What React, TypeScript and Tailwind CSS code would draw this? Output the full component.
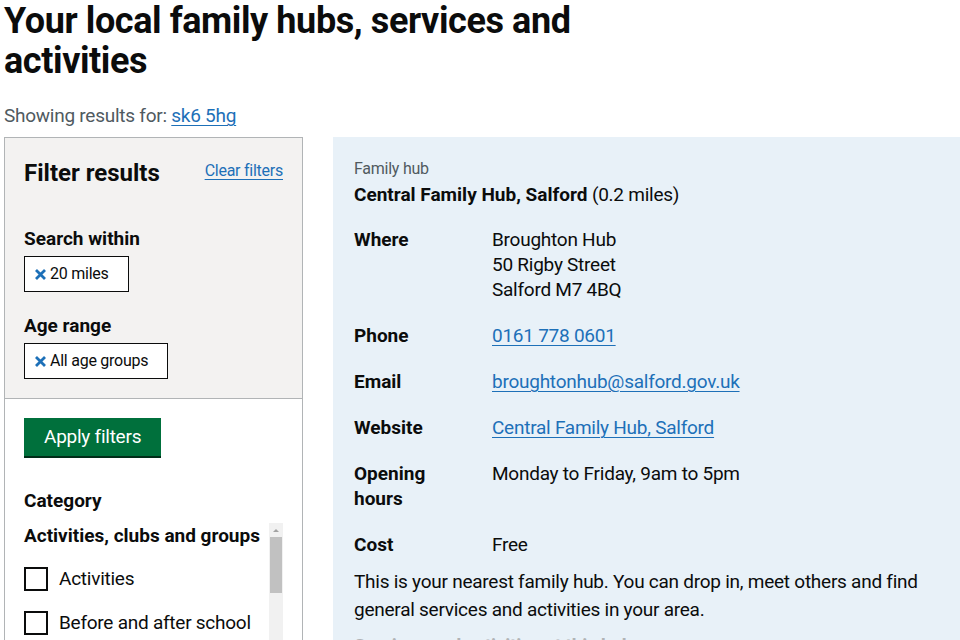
const font = { fontFamily: "Roboto, 'Liberation Sans', Arial, sans-serif" };

function Cross() {
  return (
    <svg width="13" height="13" viewBox="0 0 13 13" className="mr-[3px] shrink-0">
      <path d="M2 2 L11 11 M11 2 L2 11" stroke="#1d70b8" strokeWidth="2.8" strokeLinecap="butt" />
    </svg>
  );
}

function Tag({ label }: { label: string }) {
  return (
    <div className="inline-flex items-center h-[36px] border border-[#0b0c0c] bg-white pl-[9px] pr-[19px] text-[16px] text-[#0b0c0c]">
      <Cross />
      <span>{label}</span>
    </div>
  );
}

function Checkbox({ label }: { label: string }) {
  return (
    <div className="flex items-center gap-[11px] h-[24px]">
      <span className="w-[24px] h-[24px] border-2 border-[#0b0c0c] bg-white shrink-0" />
      <span className="text-[19px] text-[#0b0c0c]">{label}</span>
    </div>
  );
}

function Row({ label, children }: { label: React.ReactNode; children: React.ReactNode }) {
  return (
    <div className="flex mb-[21px] text-[19px] leading-[25px]">
      <div className="w-[138px] shrink-0 font-bold tracking-normal">{label}</div>
      <div>{children}</div>
    </div>
  );
}

function Link({ children }: { children: React.ReactNode }) {
  return (
    <a href="#" className="text-[#1d70b8] underline underline-offset-[3px] decoration-1">
      {children}
    </a>
  );
}

export default function App() {
  return (
    <div
      className="bg-white text-[#0b0c0c] min-h-screen overflow-hidden pl-[4px] tracking-[-0.25px]"
      style={font}
    >
      <h1 className="text-[36px] leading-[40px] font-bold tracking-[-0.4px] pt-[1px] m-0">
        Your local family hubs, services and
        <br />
        activities
      </h1>
      <p className="mt-[22px] text-[19px] leading-[25px] text-[#505a5f]">
        Showing results for: <Link>sk6 5hg</Link>
      </p>

      <div className="flex gap-[30px] mt-[9px] items-start">
        <aside className="w-[299px] shrink-0 border border-[#b1b4b6]">
          <div className="bg-[#f3f2f1] px-[19px] pt-[20px] pb-[19px] border-b border-[#b1b4b6]">
            <div className="flex justify-between items-center">
              <h2 className="text-[24px] leading-[30px] font-bold tracking-normal">Filter results</h2>
              <span className="text-[16px] -mt-[4px]">
                <Link>Clear filters</Link>
              </span>
            </div>
            <h3 className="mt-[38px] mb-[5px] text-[19px] leading-[25px] font-bold tracking-normal">
              Search within
            </h3>
            <Tag label="20 miles" />
            <h3 className="mt-[21px] mb-[5px] text-[19px] leading-[25px] font-bold tracking-normal">
              Age range
            </h3>
            <Tag label="All age groups" />
          </div>
          <div className="px-[19px] pt-[19px]">
            <button className="bg-[#00703c] text-white text-[19px] leading-[25px] px-[20px] pt-[6px] pb-[7px] shadow-[0_2px_0_#002d18] mb-[2px]">
              Apply filters
            </button>
            <h3 className="mt-[30px] text-[19px] leading-[25px] font-bold tracking-normal">Category</h3>
            <div className="mt-[10px] flex h-[120px]">
              <div className="flex-1">
                <h4 className="text-[19px] leading-[25px] font-bold tracking-normal">
                  Activities, clubs and groups
                </h4>
                <div className="mt-[19px] flex flex-col gap-[20px]">
                  <Checkbox label="Activities" />
                  <Checkbox label="Before and after school" />
                </div>
              </div>
              <div className="w-[14px] ml-[8px] bg-[#f1f1f1] flex flex-col items-center">
                <svg width="14" height="14" viewBox="0 0 14 14">
                  <path d="M4 9 L7 6 L10 9 Z" fill="#a3a3a3" />
                </svg>
                <div className="w-[12px] h-[56px] bg-[#c1c1c1]" />
              </div>
            </div>
          </div>
        </aside>

        <main className="flex-1 bg-[#e8f1f8] pl-[21px] pr-[20px] pt-[22px] pb-[40px]">
          <p className="text-[16px] leading-[20px] text-[#505a5f]">Family hub</p>
          <p className="mt-[3px] text-[19px] leading-[25px]">
            <span className="font-bold tracking-normal">Central Family Hub, Salford</span> (0.2 miles)
          </p>
          <div className="mt-[20px]">
            <Row label="Where">
              Broughton Hub
              <br />
              50 Rigby Street
              <br />
              Salford M7 4BQ
            </Row>
            <Row label="Phone">
              <Link>0161 778 0601</Link>
            </Row>
            <Row label="Email">
              <Link>broughtonhub@salford.gov.uk</Link>
            </Row>
            <Row label="Website">
              <Link>Central Family Hub, Salford</Link>
            </Row>
            <Row label={<>Opening<br />hours</>}>Monday to Friday, 9am to 5pm</Row>
            <Row label="Cost">Free</Row>
          </div>
          <p className="-mt-[10px] text-[19px] leading-[28px] max-w-[575px]">
            This is your nearest family hub. You can drop in, meet others and find general services and activities in your area.
          </p>
          <p className="mt-[9px] text-[19px] leading-[25px] font-bold text-[#b1b4b6]">
            Services and activities at this hub
          </p>
        </main>
      </div>
    </div>
  );
}
